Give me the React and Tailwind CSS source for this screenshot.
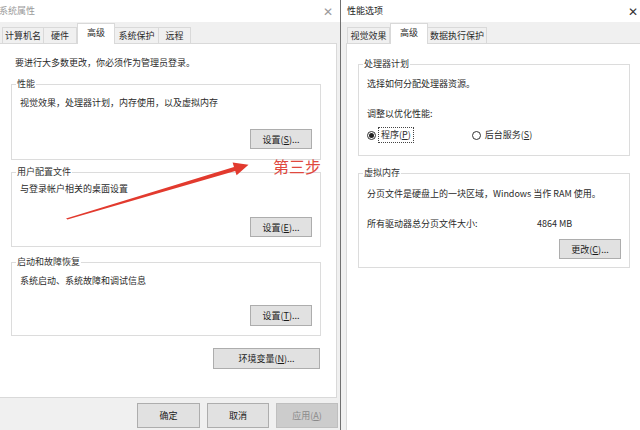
const FONT = { fontFamily: '"Noto Sans CJK SC", "Noto Sans", sans-serif' };

function Btn({ children, className = "", disabled = false }) {
  return (
    <div
      className={`flex items-center justify-center border text-[9px] leading-none ${
        disabled ? "bg-[#cccccc] border-[#bfbfbf] text-[#8a8a8a]" : "bg-[#e1e1e1] border-[#adadad] text-[#1a1a1a]"
      } ${className}`}
    >
      {children}
    </div>
  );
}

function Tab({ label, active, className = "" }) {
  return active ? (
    <div className={`relative z-10 -mb-px h-[21px] flex items-center justify-center bg-white border border-b-0 border-[#d9d9d9] ${className}`}>
      <span className="-mt-[3px]">{label}</span>
    </div>
  ) : (
    <div className={`h-[16px] flex items-center justify-center bg-[#f0f0f0] border border-b-0 border-[#d9d9d9] -ml-px first:ml-0 ${className}`}>
      {label}
    </div>
  );
}

function Group({ legend, className = "", children }) {
  return (
    <fieldset className={`border border-[#dcdcdc] ${className}`}>
      <legend className="ml-[4px] px-[1px] leading-[12px] text-[#333]">{legend}</legend>
      {children}
    </fieldset>
  );
}

function Radio({ checked }) {
  return (
    <span className="w-[9px] h-[9px] rounded-full border border-[#333] flex items-center justify-center bg-white">
      {checked && <span className="w-[5px] h-[5px] rounded-full bg-[#222]" />}
    </span>
  );
}

function SystemProps() {
  return (
    <div className="w-[341px] h-full flex flex-col bg-[#f0f0f0] border-r border-[#707070]">
      <div className="h-[22px] bg-white flex items-center justify-between pr-[7px]">
        <span className="text-[9px] text-[#9a9a9a] -ml-[1px]">系统属性</span>
        <span className="text-[12px] text-[#9a9a9a] font-light leading-none">✕</span>
      </div>
      <div className="h-[21px] flex items-end pl-[2px] text-[9px] text-[#2a2a2a]">
        <Tab label="计算机名" className="w-[42px]" />
        <Tab label="硬件" className="w-[34px]" />
        <Tab label="高级" active className="w-[38px]" />
        <Tab label="系统保护" className="w-[45px]" />
        <Tab label="远程" className="w-[33px] -ml-px" />
      </div>
      <div className="w-[337px] h-[355px] bg-white border-t border-r border-b border-[#d9d9d9] text-[9px] text-[#2a2a2a]">
        <p className="mt-[13px] pl-[15px] leading-[12px]">要进行大多数更改，你必须作为管理员登录。</p>
        <Group legend="性能" className="ml-[11px] w-[310px] mt-[9px] pb-[10px]">
          <div className="px-[8px]">
            <p className="mt-[7px] leading-[12px]">视觉效果，处理器计划，内存使用，以及虚拟内存</p>
            <div className="mt-[20px] flex justify-end">
              <Btn className="w-[62px] h-[20px]">设置(<u>S</u>)...</Btn>
            </div>
          </div>
        </Group>
        <Group legend="用户配置文件" className="ml-[11px] w-[310px] mt-[6px] pb-[9px]">
          <div className="px-[8px]">
            <p className="mt-[5px] leading-[12px]">与登录帐户相关的桌面设置</p>
            <div className="mt-[22px] flex justify-end">
              <Btn className="w-[62px] h-[20px]">设置(<u>E</u>)...</Btn>
            </div>
          </div>
        </Group>
        <Group legend="启动和故障恢复" className="ml-[11px] w-[310px] mt-[9px] pb-[9px]">
          <div className="px-[8px]">
            <p className="mt-[7px] leading-[12px]">系统启动、系统故障和调试信息</p>
            <div className="mt-[18px] flex justify-end">
              <Btn className="w-[62px] h-[21px]">设置(<u>T</u>)...</Btn>
            </div>
          </div>
        </Group>
        <div className="mt-[12px] ml-[213px]">
          <Btn className="w-[107px] h-[21px]">环境变量(<u>N</u>)...</Btn>
        </div>
      </div>
      <div className="flex pt-[5px] pl-[137px]">
        <Btn className="w-[63px] h-[25px]">确定</Btn>
        <Btn className="w-[62px] h-[25px] ml-[7px]">取消</Btn>
        <Btn disabled className="w-[62px] h-[25px] ml-[7px]">应用(<u>A</u>)</Btn>
      </div>
    </div>
  );
}

function PerfOptions() {
  return (
    <div className="flex-1 h-full flex flex-col bg-[#f0f0f0]">
      <div className="h-[22px] bg-white flex items-center justify-between pl-[6px] pr-[2px]">
        <span className="text-[9px] text-[#222]">性能选项</span>
        <span className="text-[12px] text-[#333] font-light leading-none">✕</span>
      </div>
      <div className="h-[21px] flex items-end pl-[6px] text-[9px] text-[#2a2a2a]">
        <Tab label="视觉效果" className="w-[43px]" />
        <Tab label="高级" active className="w-[38px]" />
        <Tab label="数据执行保护" className="w-[60px]" />
      </div>
      <div className="flex-1 ml-[5px] bg-white border-t border-l border-[#d9d9d9] text-[9px] text-[#2a2a2a]">
        <Group legend="处理器计划" className="ml-[11px] w-[272px] mt-[14px] pb-[12px]">
          <div className="px-[8px]">
            <p className="mt-[8px] leading-[12px]">选择如何分配处理器资源。</p>
            <p className="mt-[18px] leading-[12px]">调整以优化性能:</p>
            <div className="mt-[7px] h-[16px] flex items-center">
              <Radio checked />
              <span className="ml-[2px] px-[2px] h-[16px] flex items-center border border-dotted border-[#444]">
                程序(<u>P</u>)
              </span>
              <span className="ml-[58px]"><Radio /></span>
              <span className="ml-[4px]">后台服务(<u>S</u>)</span>
            </div>
          </div>
        </Group>
        <Group legend="虚拟内存" className="ml-[11px] w-[272px] mt-[11px] pb-[8px]">
          <div className="px-[8px]">
            <p className="mt-[9px] leading-[12px]">分页文件是硬盘上的一块区域，Windows 当作 RAM 使用。</p>
            <div className="mt-[18px] leading-[12px] flex">
              <span className="w-[170px]">所有驱动器总分页文件大小:</span>
              <span>4864 MB</span>
            </div>
            <div className="mt-[9px] flex justify-end">
              <Btn className="w-[62px] h-[20px]">更改(<u>C</u>)...</Btn>
            </div>
          </div>
        </Group>
      </div>
    </div>
  );
}

export default function App() {
  return (
    <div className="relative w-[640px] h-[430px] overflow-hidden flex bg-white" style={FONT}>
      <SystemProps />
      <PerfOptions />
      <svg className="absolute inset-0 pointer-events-none" width="640" height="430" viewBox="0 0 640 430">
        <polygon
          points="66,218.6 234,167 232.6,162.6 248.5,164.8 236.6,175.2 235.2,171 67.4,219.4"
          fill="#e23a2e"
        />
      </svg>
      <span className="absolute left-[273px] top-[156px] text-[16px] leading-[20px] text-[#e0493f]">第三步</span>
    </div>
  );
}
